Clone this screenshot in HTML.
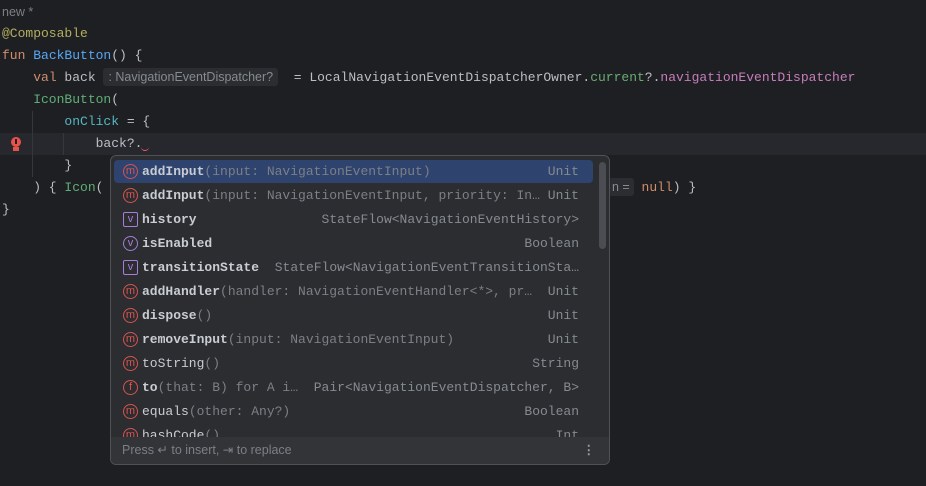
<!DOCTYPE html>
<html><head><meta charset="utf-8"><style>
*{margin:0;padding:0;box-sizing:border-box}
body{width:926px;height:486px;background:#1e1f22;overflow:hidden;position:relative;font-family:"Liberation Mono",monospace;font-size:13px;color:#bcbec4}
.l{position:absolute;left:2px;height:22px;line-height:22px;white-space:pre}
.k{color:#cf8e6d}.f{color:#56a8f5}.a{color:#b3ae60}.g{color:#5fae78}.t{color:#56b6c2}.p{color:#c77dbb}.gr{color:#6aab73}
.hint{display:inline-block;background:#2b2d30;color:#868a91;font-family:"Liberation Sans",sans-serif;font-size:12.5px;border-radius:3px;line-height:18px;padding:0 5px}
#pop{position:absolute;left:110px;top:155px;width:500px;height:310px;background:#2b2d30;border:1px solid #4e5157;border-radius:6px;overflow:hidden}
.r{position:absolute;left:3px;width:479px;height:23px;line-height:23px;white-space:pre}
.r.sel{background:#2e436e;border-radius:4px}
.ic{position:absolute;left:9px;top:4px;width:15px;height:15px;border:1.3px solid #d9534f;border-radius:50%;font-size:11px;line-height:12px;text-align:center;color:#d9534f;font-family:"Liberation Sans",sans-serif}
.ic.v{border-color:#a77dd6;color:#a77dd6}.ic.sq{border-radius:2px}
.n{position:absolute;left:28px;font-weight:bold;color:#c9ccd2}
.n span{font-weight:normal;color:#7c7f86}
.ty{position:absolute;right:14px;color:#868a91}
#foot{position:absolute;left:0;bottom:0;width:100%;height:27px;background:#323438;color:#7c7f86;font-family:"Liberation Sans",sans-serif;font-size:12.5px;line-height:27px;padding-left:11px}
</style></head><body>
<div style="position:absolute;left:0;top:133px;width:926px;height:22px;background:#26282e"></div>
<div style="position:absolute;left:32px;top:111px;width:1px;height:66px;background:#35373b"></div>
<div style="position:absolute;left:63px;top:133px;width:1px;height:22px;background:#35373b"></div>
<div class="l" style="top:1px;font-family:'Liberation Sans',sans-serif;font-size:12.5px;color:#7c7f86">new *</div>
<div class="l a" style="top:23px">@Composable</div>
<div class="l" style="top:45px"><span class="k">fun</span> <span class="f">BackButton</span>() {</div>
<div class="l" style="top:67px">    <span class="k">val</span> back <span class="hint">: NavigationEventDispatcher?</span>  = LocalNavigationEventDispatcherOwner.<span class="gr">current</span>?.<span class="p">navigationEventDispatcher</span></div>
<div class="l g" style="top:89px">    IconButton<span style="color:#bcbec4">(</span></div>
<div class="l" style="top:111px">        <span class="t">onClick</span> = {</div>
<div class="l" style="top:133px">            back?.</div>
<div style="position:absolute;left:141px;top:147px;width:8px;height:4px;border-bottom:1.5px solid #f75464;border-radius:0 0 4px 4px"></div>
<div style="position:absolute;left:11px;top:137px;width:10px;height:10px;border-radius:50%;background:#e5534b"></div>
<div style="position:absolute;left:15px;top:139px;width:2px;height:5px;background:#1e1f22"></div>
<div style="position:absolute;left:13px;top:147px;width:6px;height:1.5px;background:#e5534b"></div>
<div style="position:absolute;left:13px;top:149px;width:6px;height:1.5px;background:#e5534b"></div>
<div class="l" style="top:155px">        }</div>
<div class="l" style="top:177px">    ) { <span class="g">Icon</span>(</div>
<div class="l" style="top:177px;left:609px"><span class="hint" style="padding:0 4px 0 3px">n =</span> <span class="k">null</span>) }</div>
<div class="l" style="top:199px">}</div>
<div id="pop">
<div class="r sel" style="top:4px"><div class="ic">m</div><div class="n">addInput<span>(input: NavigationEventInput)</span></div><div class="ty">Unit</div></div>
<div class="r" style="top:28px"><div class="ic">m</div><div class="n">addInput<span>(input: NavigationEventInput, priority: In…</span></div><div class="ty">Unit</div></div>
<div class="r" style="top:52px"><div class="ic v sq">v</div><div class="n">history</div><div class="ty">StateFlow&lt;NavigationEventHistory&gt;</div></div>
<div class="r" style="top:76px"><div class="ic v">v</div><div class="n">isEnabled</div><div class="ty">Boolean</div></div>
<div class="r" style="top:100px"><div class="ic v sq">v</div><div class="n">transitionState</div><div class="ty">StateFlow&lt;NavigationEventTransitionSta…</div></div>
<div class="r" style="top:124px"><div class="ic">m</div><div class="n">addHandler<span>(handler: NavigationEventHandler&lt;*&gt;, pr…</span></div><div class="ty">Unit</div></div>
<div class="r" style="top:148px"><div class="ic">m</div><div class="n">dispose<span>()</span></div><div class="ty">Unit</div></div>
<div class="r" style="top:172px"><div class="ic">m</div><div class="n">removeInput<span>(input: NavigationEventInput)</span></div><div class="ty">Unit</div></div>
<div class="r" style="top:196px"><div class="ic">m</div><div class="n" style="font-weight:normal">toString<span>()</span></div><div class="ty">String</div></div>
<div class="r" style="top:220px"><div class="ic">f</div><div class="n">to<span>(that: B) for A i…</span></div><div class="ty">Pair&lt;NavigationEventDispatcher, B&gt;</div></div>
<div class="r" style="top:244px"><div class="ic">m</div><div class="n" style="font-weight:normal">equals<span>(other: Any?)</span></div><div class="ty">Boolean</div></div>
<div class="r" style="top:268px"><div class="ic">m</div><div class="n" style="font-weight:normal">hashCode<span>()</span></div><div class="ty">Int</div></div>
<div style="position:absolute;left:488px;top:6px;width:7px;height:87px;background:#4b4d52;border-radius:4px"></div>
<div id="foot">Press ↵ to insert, ⇥ to replace<span style="position:absolute;right:14px;color:#9a9da3;font-weight:bold">⋮</span></div>
</div>
</body></html>
